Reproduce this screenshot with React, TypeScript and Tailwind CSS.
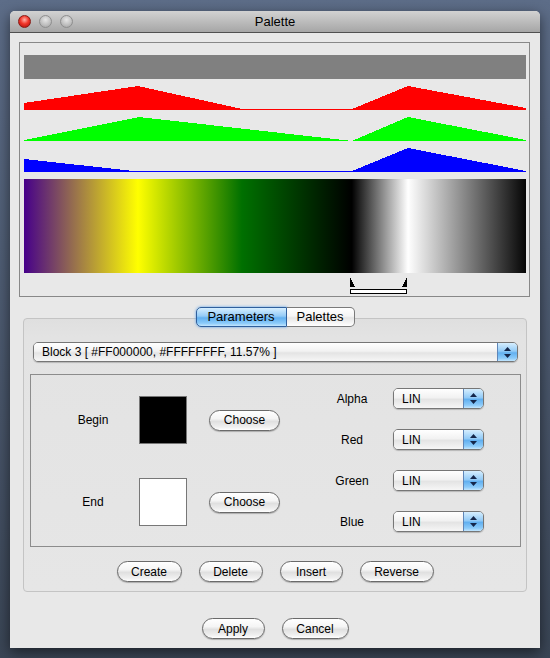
import React from 'react';

const aqua =
  'flex items-center justify-center h-[21px] rounded-full border border-[#6a6a6a] bg-[linear-gradient(to_bottom,#ffffff_0%,#f5f5f5_40%,#e0e0e0_55%,#f0f0f0_85%,#ffffff_100%)] shadow-[0_1px_1px_rgba(0,0,0,0.25)] text-[12px] text-black leading-none';

const blueAqua =
  'bg-[linear-gradient(to_bottom,#d6eefe_0%,#93cbf7_45%,#62b0f0_55%,#8ccbfa_85%,#c3e6fe_100%)]';

function Arrows() {
  return (
    <svg width="7" height="11" viewBox="0 0 7 11">
      <polygon points="0,4 3.5,0 7,4" fill="#14264a" />
      <polygon points="0,7 7,7 3.5,11" fill="#14264a" />
    </svg>
  );
}

function Combo({ text, size }: { text: string; size: string }) {
  return (
    <div className={`flex ${size} rounded-[5px] border border-[#767676] overflow-hidden shadow-[0_1px_1px_rgba(0,0,0,0.2)]`}>
      <div className="flex-1 flex items-center pl-[8px] text-[12px] text-black bg-[linear-gradient(to_bottom,#ffffff_0%,#f2f2f2_45%,#e4e4e4_55%,#f6f6f6_100%)]">
        {text}
      </div>
      <div className={`w-[20px] flex items-center justify-center border-l border-[#5f86b8] ${blueAqua}`}>
        <Arrows />
      </div>
    </div>
  );
}

function Channel({ points, color }: { points: string; color: string }) {
  return (
    <svg width="502" height="25" viewBox="0 0 502 25" className="block" shapeRendering="crispEdges">
      <polygon points={points} fill={color} />
    </svg>
  );
}

export default function App() {
  return (
    <div className="w-[550px] h-[658px] overflow-hidden bg-[linear-gradient(to_bottom,#5d6d88,#3a4555)] pt-[11px] pl-[10px] font-['Liberation_Sans',Arial,sans-serif]">
      <div className="w-[530px] h-[637px] bg-[#e8e8e8] rounded-t-[5px] shadow-[0_4px_14px_rgba(0,0,0,0.55)] flex flex-col">
        {/* Title bar */}
        <div className="relative h-[22px] shrink-0 rounded-t-[5px] border-b border-[#505050] bg-[linear-gradient(to_bottom,#d2d2d2,#a6a6a6)] flex items-center pl-[8px] gap-[8px]">
          <div className="w-[13px] h-[13px] rounded-full border border-[#8a1a14] bg-[radial-gradient(circle_at_50%_35%,#ffb2a8_0%,#f2372b_45%,#a80a06_100%)]" />
          <div className="w-[13px] h-[13px] rounded-full border border-[#8e8e8e] bg-[radial-gradient(circle_at_50%_35%,#e6e6e6_0%,#bdbdbd_60%,#9d9d9d_100%)]" />
          <div className="w-[13px] h-[13px] rounded-full border border-[#8e8e8e] bg-[radial-gradient(circle_at_50%_35%,#e6e6e6_0%,#bdbdbd_60%,#9d9d9d_100%)]" />
          <span className="absolute left-0 right-0 text-center text-[13px] text-black pointer-events-none">Palette</span>
        </div>

        {/* Palette view */}
        <div className="mt-[9px] ml-[9px] w-[511px] h-[255px] border border-[#888888] pt-[12px] pl-[4px] flex flex-col">
          <div className="w-[502px] h-[24px] bg-[#808080]" />
          <div className="mt-[6px]">
            <Channel color="#ff0000" points="0,25 0,18 114,1 218,24 328,24 384,1 502,23 502,25" />
          </div>
          <div className="mt-[6px]">
            <Channel color="#00ff00" points="0,25 0,24 115,1 328,25 384,1 502,24 502,25" />
          </div>
          <div className="mt-[6px]">
            <Channel color="#0000ff" points="0,25 0,12 110,24 328,24 384,1 502,24 502,25" />
          </div>
          <div className="mt-[7px] w-[502px] h-[94px] bg-[linear-gradient(to_right,#46008a_0%,#ffff00_22.7%,#007000_43.4%,#000000_65.3%,#ffffff_76.5%,#050505_100%)]" />
          <svg width="502" height="21" viewBox="0 0 502 21" className="block" shapeRendering="crispEdges">
            <polygon points="326,4 326,14 331,14" fill="#000" />
            <polygon points="383,4 383,14 378,14" fill="#000" />
            <rect x="326.5" y="16.5" width="56" height="4" fill="#fff" stroke="#000" strokeWidth="1" />
          </svg>
        </div>

        {/* Tabs */}
        <div className="relative z-10 mt-[10px] flex justify-center h-[20px]">
          <div className={`w-[91px] h-[20px] flex items-center justify-center text-[13px] text-black rounded-l-[5px] border border-[#2f5f9c] shadow-[0_0_3px_#5aa0e8] ${blueAqua}`}>
            Parameters
          </div>
          <div className="w-[68px] h-[20px] flex items-center justify-center text-[13px] text-black rounded-r-[5px] border border-l-0 border-[#7a7a7a] bg-[linear-gradient(to_bottom,#ffffff_0%,#f5f5f5_45%,#e6e6e6_55%,#ffffff_100%)]">
            Palettes
          </div>
        </div>

        {/* Tab panel */}
        <div className="-mt-[9px] ml-[13px] w-[504px] h-[274px] rounded-[4px] border border-[#c4c4c4] bg-[linear-gradient(to_bottom,#dfdfdf_0px,#e3e3e3_18px,#e6e6e6_100%)] pt-[23px] flex flex-col">
          <div className="ml-[9px]">
            <Combo text="Block 3 [ #FF000000, #FFFFFFFF, 11.57% ]" size="w-[485px] h-[20px]" />
          </div>

          <div className="mt-[12px] ml-[6px] w-[491px] h-[173px] border border-[#8c8c8c] flex">
            <div className="pl-[16px] pt-[21px] flex flex-col gap-[34px]">
              {[
                { label: 'Begin', color: 'bg-black' },
                { label: 'End', color: 'bg-white' },
              ].map((r) => (
                <div key={r.label} className="flex items-center h-[48px]">
                  <span className="w-[92px] text-center text-[12px] text-black">{r.label}</span>
                  <div className={`w-[48px] h-[48px] border border-[#777777] ${r.color}`} />
                  <div className={`${aqua} ml-[22px] w-[71px]`}>Choose</div>
                </div>
              ))}
            </div>
            <div className="ml-[42px] pt-[13px] flex flex-col gap-[20px]">
              {['Alpha', 'Red', 'Green', 'Blue'].map((l) => (
                <div key={l} className="flex items-center h-[21px]">
                  <span className="w-[60px] text-center text-[12px] text-black">{l}</span>
                  <div className="ml-[11px]">
                    <Combo text="LIN" size="w-[91px] h-[21px]" />
                  </div>
                </div>
              ))}
            </div>
          </div>

          <div className="mt-[14px] flex justify-center gap-[17px]">
            <div className={`${aqua} w-[65px]`}>Create</div>
            <div className={`${aqua} w-[64px]`}>Delete</div>
            <div className={`${aqua} w-[63px]`}>Insert</div>
            <div className={`${aqua} w-[74px]`}>Reverse</div>
          </div>
        </div>

        {/* Dialog buttons */}
        <div className="mt-[26px] flex justify-center gap-[17px]">
          <div className={`${aqua} w-[63px]`}>Apply</div>
          <div className={`${aqua} w-[67px]`}>Cancel</div>
        </div>
      </div>
    </div>
  );
}
